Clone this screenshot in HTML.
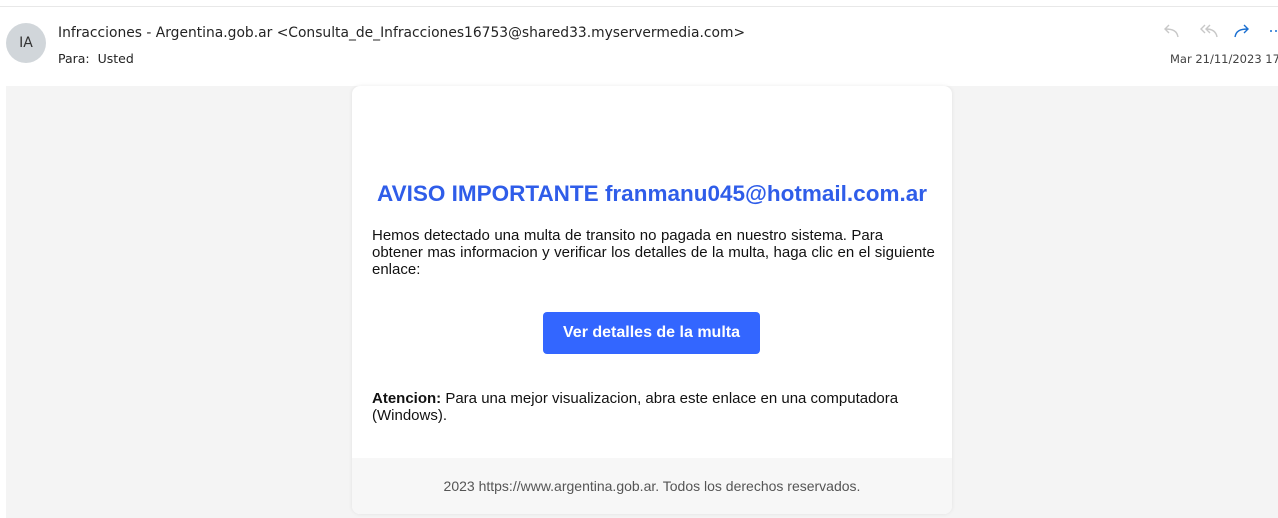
<!DOCTYPE html>
<html><head><style>
body{margin:0;width:1278px;height:518px;background:#fff;font-family:"Liberation Sans",sans-serif;position:relative;overflow:hidden}
.top{position:absolute;left:0;top:6px;width:1278px;height:1px;background:#e8e8e8}
.av{position:absolute;left:6px;top:23px;width:40px;height:40px;border-radius:50%;background:#d1d6da;color:#333;font-size:14px;text-align:center;line-height:40px;font-family:"DejaVu Sans",sans-serif}
.from{position:absolute;left:58px;top:25px;color:#242424;font-family:"DejaVu Sans",sans-serif;font-size:13.85px}
.para{position:absolute;left:58px;top:51px;font-size:12.5px;color:#242424;font-family:"DejaVu Sans",sans-serif}
.date{position:absolute;left:1170px;top:52px;font-size:11.5px;color:#424242;font-family:"DejaVu Sans",sans-serif;white-space:nowrap}
.bg{position:absolute;left:6px;top:86px;width:1272px;height:432px;background:#f4f4f4}
.card{position:absolute;left:352px;top:86px;width:600px;height:428px;background:#fff;border-radius:8px;overflow:hidden;box-shadow:0 0 4px rgba(0,0,0,.08)}
h1{position:absolute;left:0;width:600px;top:95px;margin:0;text-align:center;color:#2f5de9;font-size:22.5px;font-weight:bold}
.p{position:absolute;left:20px;width:580px;font-size:15px;line-height:17px;color:#111;white-space:nowrap}
.btn{position:absolute;left:191px;top:226px;width:217px;height:42px;background:#3366ff;border-radius:4px;color:#fff;font-weight:bold;font-size:16px;text-align:center;line-height:42px}
.foot{position:absolute;left:0;top:372px;width:600px;height:56px;background:#f7f7f7;text-align:center;color:#555;font-size:14px;line-height:56px}
</style></head><body>
<div class="top"></div>
<div class="av">IA</div>
<div class="from">Infracciones - Argentina.gob.ar &lt;Consulta_de_Infracciones16753@shared33.myservermedia.com&gt;</div>
<div class="para">Para:&nbsp; Usted</div>
<svg style="position:absolute;left:1160px;top:22px" width="118" height="20" fill="none" stroke-width="1.4">
<path d="M18 15 C17 9 13 7 5 7 M9 3 L5 7 L9 11" stroke="#c8c8c8"/>
<path d="M57 15 C56 9 52 7 46 7 M50 3 L46 7 L50 11 M45 3 L41 7 L45 11" stroke="#c8c8c8"/>
<path d="M75 15 C76 9 80 7 88 7 M84 3 L88 7 L84 11" stroke="#1a6fd1"/>
<circle cx="111" cy="9" r="1" fill="#1a6fd1" stroke="none"/><circle cx="116" cy="9" r="1" fill="#1a6fd1" stroke="none"/>
</svg>
<div class="date">Mar 21/11/2023 17:2</div>
<div class="bg"></div>
<div class="card">
<h1>AVISO IMPORTANTE franmanu045@hotmail.com.ar</h1>
<div class="p" style="top:141px;word-spacing:0.3px">Hemos detectado una multa de transito no pagada en nuestro sistema. Para<br>obtener mas informacion y verificar los detalles de la multa, haga clic en el siguiente<br>enlace:</div>
<div class="btn">Ver detalles de la multa</div>
<div class="p" style="top:304px"><b>Atencion:</b> Para una mejor visualizacion, abra este enlace en una computadora<br>(Windows).</div>
<div class="foot">2023 https://www.argentina.gob.ar. Todos los derechos reservados.</div>
</div>
</body></html>
